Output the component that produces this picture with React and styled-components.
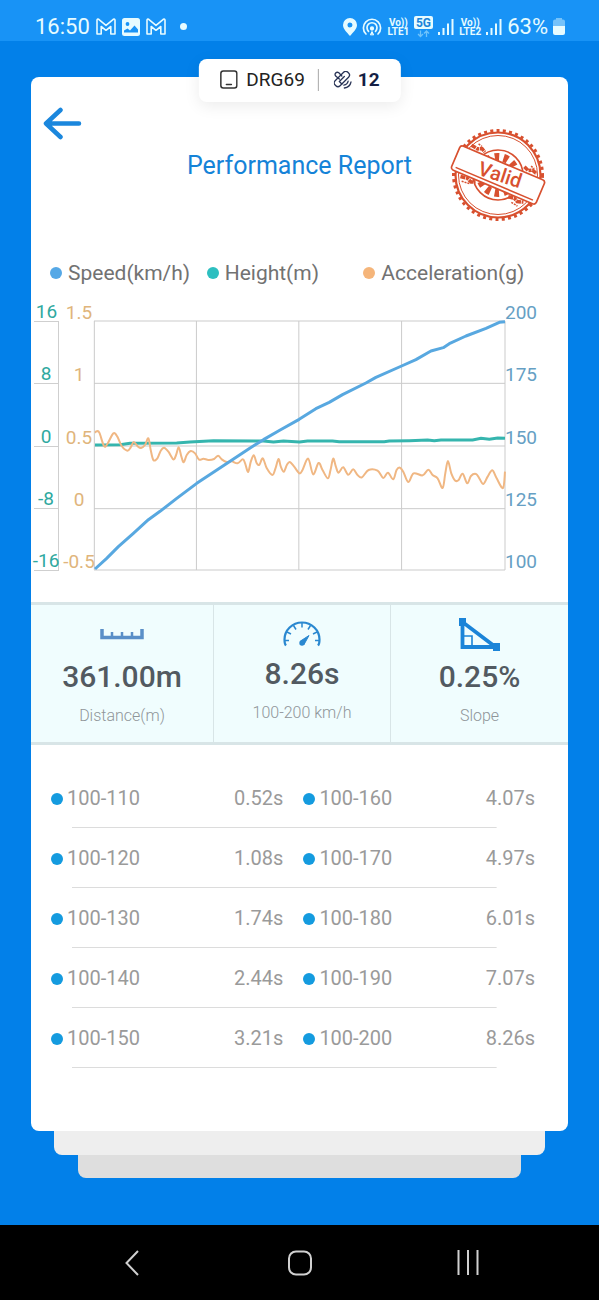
import React from 'react';
import styled, { createGlobalStyle } from 'styled-components';

const GlobalStyle = createGlobalStyle`
  * {
    box-sizing: border-box;
  }

  body {
    margin: 0;
    background: #0280e9;
    font-family: Roboto, "Liberation Sans", sans-serif;
  }

  button {
    padding: 0;
    border: 0;
    background: none;
    cursor: pointer;
  }

  svg {
    display: block;
  }
`;

const Screen = styled.div`
  display: flex;
  flex-direction: column;
  min-height: 100vh;
`;

const StatusBar = styled.header`
  display: flex;
  justify-content: space-between;
  align-items: center;
  padding: 12px 34px 0 35px;
  height: 41px;
  background: #1893f6;
  color: #e6fbff;
  font-size: 22px;
  line-height: 28px;
`;

const StatusGroup = styled.div`
  display: flex;
  align-items: center;
  gap: ${(props) => props.$gap}px;
`;

const StatusDot = styled.span`
  width: 7px;
  height: 7px;
  margin-left: 8px;
  border-radius: 50%;
  background: #e6fbff;
`;

const Network = styled.span`
  display: flex;
  flex-direction: column;
  align-items: center;
  font-size: 10px;
  font-weight: 700;
  line-height: 9px;
`;

const Main = styled.main`
  flex: 1;
  padding: 36px 31px 47px;
`;

const Card = styled.section`
  position: relative;
  padding-bottom: 63px;
  border-radius: 8px;
  background: #fff;
`;

const Sheet = styled.div`
  height: ${(props) => props.$height}px;
  margin: 0 ${(props) => props.$inset}px;
  border-radius: 0 0 8px 8px;
  background: ${(props) => props.$color};
`;

const DevicePill = styled.div`
  position: absolute;
  top: -18px;
  left: 50%;
  transform: translateX(-50%);
  display: flex;
  align-items: center;
  height: 43px;
  padding: 0 21px 2px;
  border-radius: 8px;
  background: #fff;
  box-shadow: 0 4px 16px rgba(0, 0, 0, 0.08);
  color: #222;
  font-size: 19px;
`;

const DeviceName = styled.span`
  margin-left: 9px;
  padding-right: 13px;
`;

const Satellites = styled.span`
  display: flex;
  align-items: center;
  gap: 6px;
  padding-left: 15px;
  border-left: 1px solid #a8a8a8;
  color: #141f45;
  font-weight: 700;
  line-height: 22px;
`;

const ReportHeader = styled.div`
  display: grid;
  grid-template-columns: 1fr auto 1fr;
  align-items: start;
  height: 184px;
  padding: 30px 12px 0;
`;

const BackButton = styled.button`
  width: 39px;
`;

const Title = styled.h1`
  margin: 44px 0 0;
  color: #1583d8;
  font-size: 25px;
  font-weight: 400;
  line-height: 30px;
`;

const StampBox = styled.div`
  justify-self: end;
  margin: 20px 10px 0 0;
`;

const Legend = styled.ul`
  display: grid;
  grid-template-columns: repeat(3, minmax(0, 1fr));
  margin: 0;
  padding: 0 48px 0 19px;
  list-style: none;
  color: #727272;
  font-size: 21px;
  line-height: 24px;
`;

const LegendItem = styled.li`
  display: flex;
  align-items: center;
  gap: 6px;
  white-space: nowrap;
`;

const Dot = styled.span`
  display: inline-block;
  flex-shrink: 0;
  width: 12px;
  height: 12px;
  border-radius: 50%;
  background: ${(props) => props.$color};
`;

const Chart = styled.div`
  display: flex;
  height: 272px;
  margin: 14px 0 31px;
  padding: 0 3px;
`;

const Axis = styled.div`
  display: grid;
  grid-template-columns: minmax(0, 1fr);
  grid-template-rows: 23px repeat(4, 1fr);
  width: ${(props) => props.$width}px;
  padding-left: ${(props) => props.$indent || 0}px;
  color: ${(props) => props.$color};
  font-size: 19px;
  line-height: 19px;
`;

const Tick = styled.div`
  display: flex;
  align-items: flex-end;
  justify-content: ${(props) => props.$align || 'center'};
  white-space: nowrap;
  border: 0 solid #cfcfcf;
  border-bottom-width: ${(props) => (props.$ruled ? 1 : 0)}px;

  &:not(:first-child) {
    border-right-width: ${(props) => (props.$ruled ? 1 : 0)}px;
  }
`;

const Plot = styled.svg`
  flex: 1;
  min-width: 0;
  height: 249px;
  margin-top: 22px;
  overflow: visible;

  path {
    fill: none;
    vector-effect: non-scaling-stroke;
  }
`;

const Stats = styled.div`
  display: grid;
  grid-template-columns: 182fr 177fr 178fr;
  height: 143px;
  border-top: 3px solid #d8e5e7;
  border-bottom: 3px solid #d8e5e7;
  background: #f0fdfe;
`;

const Stat = styled.div`
  display: flex;
  flex-direction: column;
  align-items: center;
  padding-top: 10px;

  & + & {
    border-left: 1px solid #d8e5e7;
  }
`;

const StatIcon = styled.div`
  display: flex;
  align-items: center;
  justify-content: center;
  height: 38px;
`;

const StatValue = styled.strong`
  margin-top: ${(props) => (props.$raised ? 3 : 6)}px;
  color: #525a61;
  font-size: 30px;
  font-weight: 500;
  line-height: 36px;
`;

const StatLabel = styled.span`
  margin-top: 11px;
  color: #8f9599;
  font-size: 16px;
  font-weight: 300;
  line-height: 20px;
`;

const Times = styled.table`
  width: 100%;
  margin-top: 23px;
  border-collapse: collapse;
  table-layout: fixed;
  color: #9a9a9a;
  font-size: 20px;
  line-height: 24px;
`;

const TimesRow = styled.tr`
  height: 60px;
  background: linear-gradient(#dcdcdc, #dcdcdc) no-repeat 41px 100% / calc(100% - 112px) 1px;
`;

const Range = styled.th`
  width: ${(props) => props.$width};
  padding: 0 0 0 20px;
  font-weight: 400;
  text-align: left;

  ${Dot} {
    margin-right: 4px;
  }
`;

const Time = styled.td`
  width: ${(props) => props.$width};
  padding: 0 ${(props) => props.$pad}px 0 0;
  text-align: right;
`;

const NavBar = styled.nav`
  display: grid;
  grid-template-columns: repeat(3, 168px);
  justify-content: center;
  align-items: center;
  height: 75px;
  background: #000;
`;

const NavButton = styled.button`
  display: flex;
  justify-content: center;
`;

const series = {
  speed: [
    [3, 744], [38, 712], [73, 677], [118, 637], [163, 596], [198, 571], [248, 532], [308, 487],
    [358, 454], [408, 421], [468, 381], [508, 356], [558, 327], [615, 295], [665, 263], [705, 244],
    [745, 221], [815, 186], [845, 169], [922, 135], [965, 116], [1010, 90], [1047, 80], [1065, 68],
    [1115, 45], [1175, 22], [1215, 4], [1232, 2],
  ],
  height: [
    [3, 372], [78, 371], [108, 367], [248, 366], [288, 363], [358, 359], [508, 360], [538, 363],
    [568, 360], [616, 363], [640, 360], [715, 360], [735, 362], [870, 362], [885, 360], [945, 359],
    [1000, 357], [1020, 359], [1040, 357], [1135, 357], [1160, 352], [1185, 355], [1210, 351], [1232, 352],
  ],
  acceleration: [
    [3, 335], [8, 331], [16, 335], [30, 375], [40, 369], [58, 337], [70, 347], [83, 375],
    [100, 389], [110, 379], [119, 363], [130, 375], [141, 381], [153, 372], [163, 352], [170, 387],
    [178, 417], [190, 412], [200, 389], [210, 380], [223, 392], [238, 415], [246, 402], [254, 379],
    [262, 407], [269, 424], [278, 402], [290, 390], [303, 397], [315, 416], [328, 413], [343, 417],
    [360, 414], [372, 404], [383, 415], [398, 423], [413, 421], [430, 427], [446, 415], [453, 427],
    [462, 453], [470, 422], [479, 403], [488, 427], [496, 431], [506, 412], [518, 442], [535, 462],
    [544, 442], [553, 414], [560, 437], [569, 452], [578, 432], [587, 423], [600, 437], [616, 457],
    [625, 447], [642, 413], [657, 460], [673, 426], [685, 447], [701, 472], [709, 447], [717, 413],
    [725, 437], [733, 455], [747, 439], [762, 461], [777, 445], [790, 462], [803, 469], [823, 447],
    [850, 449], [867, 471], [881, 455], [897, 475], [907, 447], [917, 440], [927, 452], [942, 483],
    [958, 457], [985, 463], [1002, 446], [1015, 462], [1030, 472], [1045, 501], [1053, 457], [1061, 420],
    [1071, 457], [1083, 479], [1093, 477], [1105, 458], [1119, 487], [1130, 465], [1145, 459], [1155, 472],
    [1167, 489], [1180, 467], [1194, 448], [1207, 472], [1226, 501], [1232, 452],
  ],
};

// smooth curve through every point
const toPath = (points) => {
  let d = `M${points[0][0]} ${points[0][1]}`;
  for (let i = 0; i < points.length - 1; i++) {
    const a = points[i - 1] || points[i];
    const b = points[i];
    const c = points[i + 1];
    const e = points[i + 2] || c;
    d += `C${b[0] + (c[0] - a[0]) / 6} ${b[1] + (c[1] - a[1]) / 6} ${c[0] - (e[0] - b[0]) / 6} ${c[1] - (e[1] - b[1]) / 6} ${c[0]} ${c[1]}`;
  }
  return d;
};

const toLine = (points) => `M${points.map((p) => p.join(' ')).join('L')}`;

const rows = [
  ['100-110', '0.52s', '100-160', '4.07s'],
  ['100-120', '1.08s', '100-170', '4.97s'],
  ['100-130', '1.74s', '100-180', '6.01s'],
  ['100-140', '2.44s', '100-190', '7.07s'],
  ['100-150', '3.21s', '100-200', '8.26s'],
];

const MailIcon = () => (
  <svg width="20" height="17" viewBox="0 0 20 17" fill="none" stroke="#e6fbff" strokeWidth="1.600" strokeLinejoin="round">
    <path d="M1 16V2.200Q1 .5 2.700 1.300L10 7.300 17.300 1.300Q19 .5 19 2.200V16H14.800V8.500L10 12.300 5.200 8.500V16Z" />
  </svg>
);

const PictureIcon = () => (
  <svg width="18" height="18" viewBox="0 0 18 18">
    <rect width="18" height="18" rx="2.500" fill="#e6fbff" />
    <circle cx="5.500" cy="6" r="1.900" fill="#1893f6" />
    <path d="M2 14.500V12.500L5.500 10.500 8 12.500 12.500 7.500 16 11.500V14.500Z" fill="#1893f6" />
  </svg>
);

const PinIcon = () => (
  <svg width="14" height="18" viewBox="0 0 14 18">
    <path fillRule="evenodd" fill="#e6fbff" d="M7 0a7 7 0 0 1 7 7c0 4-4 7.500-7 11C4 14.500 0 11 0 7a7 7 0 0 1 7-7Zm0 4.500a2.500 2.500 0 1 0 0 5 2.500 2.500 0 0 0 0-5Z" />
  </svg>
);

const HotspotIcon = () => (
  <svg width="20" height="18" viewBox="0 0 20 18" fill="none" stroke="#e6fbff" strokeWidth="1.700" strokeLinecap="round">
    <path d="M4 16a8.600 8.600 0 1 1 12 0M6.500 13.300a5 5 0 1 1 7 0" />
    <circle cx="10" cy="10.500" r="1.300" fill="#e6fbff" />
    <path d="M8.500 16.500 10 13.500 11.500 16.500Z" fill="#e6fbff" strokeWidth="1" />
  </svg>
);

const FiveGIcon = () => (
  <svg width="19" height="22" viewBox="0 0 19 22">
    <rect width="19" height="13" rx="2" fill="#e6fbff" />
    <text x="9.500" y="11" textAnchor="middle" fontSize="12" fontWeight="700" fill="#1b84d8">5G</text>
    <path d="M6.500 14.500v6M4 18l2.500 2.500L9 18M12.500 21v-6M10 17.500l2.500-2.500 2.500 2.500" fill="none" stroke="#6fc3fb" strokeWidth="1.300" />
  </svg>
);

const SignalIcon = () => (
  <svg width="16" height="17" viewBox="0 0 16 17" stroke="#e6fbff" strokeWidth="2">
    <path d="M1 14v3M5.500 10v7M10 5.500V17M14.500 1v16" />
  </svg>
);

const BatteryIcon = () => (
  <svg width="12" height="17" viewBox="0 0 12 17">
    <path d="M3 0h6v1.500h1a2 2 0 0 1 2 2V8H0V3.500a2 2 0 0 1 2-2h1Z" fill="#74c2fa" />
    <path d="M0 8h12v7a2 2 0 0 1-2 2H2a2 2 0 0 1-2-2Z" fill="#e6fbff" />
  </svg>
);

const DeviceIcon = () => (
  <svg width="18" height="19" viewBox="0 0 18 19" fill="none" stroke="#333" strokeWidth="1.500" strokeLinecap="round">
    <rect x="1" y="1" width="16" height="17" rx="2.500" />
    <path d="M6.500 14.500h5" />
  </svg>
);

const SatelliteIcon = () => (
  <svg width="18" height="18" viewBox="0 0 18 18" fill="none" stroke="#2a3557" strokeWidth="1.300" strokeLinecap="round">
    <rect x="4.500" y="-1" width="7" height="18" rx="3" transform="rotate(45 8 8)" />
    <path d="M5.500 8 1.800 5Q.6 3.300 1.800 2 3.300.6 5 1.800L8 5M5.500 10.500 8 13M10.500 5.500 5.500 10.500" />
    <path d="M10 14.200q3.500-.5 4.300-4M10.500 17q5.500-.8 6.700-6" />
  </svg>
);

const ArrowIcon = () => (
  <svg width="39" height="33" viewBox="0 0 39 33" fill="none" stroke="#1b87dd" strokeWidth="4.500" strokeLinecap="round" strokeLinejoin="round">
    <path d="M36 16.500H4M17.500 3 3 16.500 17.500 30" />
  </svg>
);

const Stamp = () => (
  <svg width="96" height="96" viewBox="0 0 96 96" fill="none" stroke="#d8502f">
    <circle cx="48" cy="48" r="44.500" strokeWidth="3" strokeDasharray="3 3.300" />
    <circle cx="48" cy="48" r="42.500" strokeWidth="2.200" />
    <circle cx="48" cy="48" r="39.500" strokeWidth="1" />
    <circle cx="48" cy="48" r="25" strokeWidth="1.600" />
    <circle cx="48" cy="48" r="18" strokeWidth="8" strokeDasharray="4.500 4.500" />
    <g transform="rotate(23 48 48)">
      <path d="M12 31l7 1 4-2 4 2M69 30l5 2 4-2 5 2M14 64l7-1 5 2 4-2M66 64l6-1 4 2 6-2" strokeWidth="3.500" strokeDasharray="5 .7 3 .7" />
      <path d="M18 27l4 1M75 27l4 1M17 68l8-1M71 68l7 1" strokeWidth="1.500" strokeDasharray="2 1" />
      <rect x="2" y="35" width="92" height="26" rx="3" fill="#fff" strokeWidth="1.700" />
      <path d="M6 57.500H90" strokeWidth="1.500" />
    </g>
    <text x="50" y="54" transform="rotate(18 48 48)" textAnchor="middle" fontSize="20" fontWeight="500" fill="#d8502f" stroke="none">Valid</text>
  </svg>
);

const RulerIcon = () => (
  <svg width="44" height="12" viewBox="0 0 44 12" fill="none" stroke="#5a8fc8">
    <path d="M2 1V9.500H42V1" strokeWidth="3.500" />
    <path d="M12 4v6M22 4v6M32 4v6" strokeWidth="2.500" />
  </svg>
);

const GaugeIcon = () => (
  <svg width="38" height="26" viewBox="0 0 38 26" fill="none" stroke="#2a88d0">
    <path d="M3 24.500Q1.500 23 1.500 18.500a17.500 17 0 0 1 35 0Q36.500 23 35 24.500" strokeWidth="2.200" />
    <path d="M2 19.500h4M4 11l4 2M10.500 4.500l2.500 4M19 2v4.500M27.500 4.500l-2.500 4M34 11l-4 2M36 19.500h-4" strokeWidth="1.500" />
    <path d="M26 14.500 17.500 20 21 23.500Z" fill="#2a88d0" strokeWidth="1" />
    <circle cx="19" cy="22" r="2.700" fill="#2a88d0" stroke="none" />
  </svg>
);

const SlopeIcon = () => (
  <svg width="41" height="33" viewBox="0 0 41 33" fill="none" stroke="#1b84d8">
    <path d="M3.500 4V29H36.500Z" strokeWidth="3.800" />
    <path d="M4 18H13V28" strokeWidth="1.600" />
    <path d="M0 0h7v8H0ZM34 25h7v8h-7Z" fill="#1b84d8" stroke="none" />
  </svg>
);

const SpeedChart = () => (
  <Chart>
    <Axis $width={25} $color="#2fa9a0">
      {['16', '8', '0', '-8', '-16'].map((t) => <Tick key={t} $ruled>{t}</Tick>)}
    </Axis>
    <Axis $width={35} $indent={5} $color="#dfb57c">
      {['1.5', '1', '0.5', '0', '-0.5'].map((t) => <Tick key={t}>{t}</Tick>)}
    </Axis>
    <Plot viewBox="0 0 1232 747" preserveAspectRatio="none" role="img" aria-label="Speed, height and acceleration">
      <path d="M0 0H1232M0 187H1232M0 375H1232M0 563H1232M0 747H1232M1 0V747M307 0V747M614 0V747M922 0V747M1232 0V747" stroke="#cbcbcb" strokeWidth="1" />
      <path d={toLine(series.height)} stroke="#35b5ae" strokeWidth="3" />
      <path d={toPath(series.acceleration)} stroke="#f0b783" strokeWidth="2" />
      <path d={toLine(series.speed)} stroke="#58a8e0" strokeWidth="3" strokeLinejoin="round" />
    </Plot>
    <Axis $width={60} $color="#669fc4">
      {['200', '175', '150', '125', '100'].map((t) => <Tick key={t} $align="flex-start">{t}</Tick>)}
    </Axis>
  </Chart>
);

const App = () => {
  return (
    <Screen>
      <GlobalStyle />
      <StatusBar>
        <StatusGroup $gap={6}>
          <span>16:50</span>
          <MailIcon />
          <PictureIcon />
          <MailIcon />
          <StatusDot />
        </StatusGroup>
        <StatusGroup $gap={5}>
          <PinIcon />
          <HotspotIcon />
          <Network><span>Vo))</span><span>LTE1</span></Network>
          <FiveGIcon />
          <SignalIcon />
          <Network><span>Vo))</span><span>LTE2</span></Network>
          <SignalIcon />
          <span>63%</span>
          <BatteryIcon />
        </StatusGroup>
      </StatusBar>

      <Main>
        <Card>
          <DevicePill>
            <DeviceIcon />
            <DeviceName>DRG69</DeviceName>
            <Satellites><SatelliteIcon />12</Satellites>
          </DevicePill>

          <ReportHeader>
            <BackButton aria-label="Back"><ArrowIcon /></BackButton>
            <Title>Performance Report</Title>
            <StampBox><Stamp /></StampBox>
          </ReportHeader>

          <Legend>
            <LegendItem><Dot $color="#55a8e6" />Speed(km/h)</LegendItem>
            <LegendItem><Dot $color="#2dbfc0" />Height(m)</LegendItem>
            <LegendItem><Dot $color="#f5b57a" />Acceleration(g)</LegendItem>
          </Legend>

          <SpeedChart />

          <Stats>
            <Stat>
              <StatIcon><RulerIcon /></StatIcon>
              <StatValue>361.00m</StatValue>
              <StatLabel>Distance(m)</StatLabel>
            </Stat>
            <Stat>
              <StatIcon><GaugeIcon /></StatIcon>
              <StatValue $raised>8.26s</StatValue>
              <StatLabel>100-200 km/h</StatLabel>
            </Stat>
            <Stat>
              <StatIcon><SlopeIcon /></StatIcon>
              <StatValue>0.25%</StatValue>
              <StatLabel>Slope</StatLabel>
            </Stat>
          </Stats>

          <Times>
            <tbody>
              {rows.map(([rangeA, timeA, rangeB, timeB]) => (
                <TimesRow key={rangeA}>
                  <Range scope="row" $width="26%"><Dot $color="#149bdf" />{rangeA}</Range>
                  <Time $width="21%" $pad={0}>{timeA}</Time>
                  <Range $width="27%"><Dot $color="#149bdf" />{rangeB}</Range>
                  <Time $width="26%" $pad={33}>{timeB}</Time>
                </TimesRow>
              ))}
            </tbody>
          </Times>
        </Card>
        <Sheet $height={24} $inset={23} $color="#eeeeee" />
        <Sheet $height={23} $inset={47} $color="#dedede" />
      </Main>

      <NavBar>
        <NavButton aria-label="Back">
          <svg width="14" height="26" viewBox="0 0 14 26" fill="none" stroke="#d0d0d0" strokeWidth="2">
            <path d="M13 1 1.500 13 13 25" />
          </svg>
        </NavButton>
        <NavButton aria-label="Home">
          <svg width="24" height="26" viewBox="0 0 24 26" fill="none" stroke="#d0d0d0" strokeWidth="2">
            <rect x="1" y="1.500" width="22" height="23" rx="7" />
          </svg>
        </NavButton>
        <NavButton aria-label="Recent apps">
          <svg width="22" height="25" viewBox="0 0 22 25" stroke="#d0d0d0" strokeWidth="2">
            <path d="M1.500 0V25M11 0V25M20.500 0V25" />
          </svg>
        </NavButton>
      </NavBar>
    </Screen>
  );
};

export default App;
